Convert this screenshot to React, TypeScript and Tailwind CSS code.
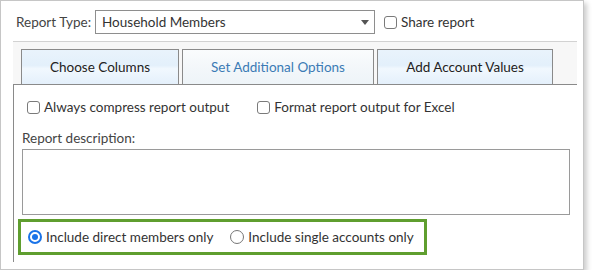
import { useState } from "react";

const font = "font-['Segoe_UI','Lato','Noto_Sans',sans-serif]";

const Checkbox = ({ label }: { label: string }) => (
  <label className="flex h-[17px] items-center">
    <span className="h-[13px] w-[13px] rounded-[3px] border border-[#7a7a7a] bg-white" />
    <span className="ml-[4px] text-[13.5px] leading-[17px] text-[#333]">{label}</span>
  </label>
);

const Radio = ({
  label,
  checked,
  onClick,
}: {
  label: string;
  checked: boolean;
  onClick: () => void;
}) => (
  <button onClick={onClick} className="flex items-center">
    {checked ? (
      <span className="flex h-[14px] w-[14px] items-center justify-center rounded-full border-2 border-[#1a73e8] bg-white">
        <span className="h-[6px] w-[6px] rounded-full bg-[#1a73e8]" />
      </span>
    ) : (
      <span className="h-[14px] w-[14px] rounded-full border border-[#767676] bg-white" />
    )}
    <span className="ml-[4px] text-[13.5px] leading-[17px] text-[#333]">{label}</span>
  </button>
);

const App = () => {
  const [direct, setDirect] = useState(true);
  const tabs = [
    { name: "Choose Columns", w: "w-[158px]", active: false },
    { name: "Set Additional Options", w: "w-[192px]", active: true },
    { name: "Add Account Values", w: "w-[176px]", active: false },
  ];

  return (
    <div className={font}>
      <div className="h-[270px] w-[584px] border border-[#c6c6c6] bg-white shadow-[3px_3px_5px_rgba(0,0,0,0.2)]">
        {/* Report type row */}
        <div className="ml-[15px] mt-[9px] flex h-[24px] items-center">
          <span className="text-[13.5px] leading-[17px] text-[#444]">Report Type:</span>
          <div className="ml-[4px] flex h-[24px] w-[280px] items-center justify-between border border-[#8e8e8e] bg-white pl-[6px] pr-[5px]">
            <span className="text-[13.5px] leading-[17px] text-[#333]">Household Members</span>
            <span className="h-0 w-0 border-x-[4px] border-t-[5px] border-x-transparent border-t-[#555]" />
          </div>
          <div className="ml-[9px]">
            <Checkbox label="Share report" />
          </div>
        </div>

        {/* Tabs */}
        <div className="ml-[12px] mt-[7px] w-[564px] border-t border-[#d2d2d2] bg-[#f7f7f7] pl-[8px] pt-[7px]">
          <div className="flex gap-[3px]">
            {tabs.map((t) => (
              <div
                key={t.name}
                className={`${t.w} flex h-[35px] items-center justify-center border-x border-t border-[#8a8a8a] pt-[1px] text-[13.5px] ${
                  t.active
                    ? "bg-[linear-gradient(#fafcfd,#f3f7fa_50%,#eef4f8)] text-[#3b7bb5]"
                    : "bg-[linear-gradient(#e9f3fc,#e3f0fb_45%,#f1f8fe_55%,#e4f0fb)] text-[#222]"
                }`}
              >
                {t.name}
              </div>
            ))}
          </div>
        </div>

        {/* Content */}
        <div className="ml-[12px] h-[178px] w-[564px] border-l border-t border-[#8a8a8a] bg-white pl-[8px] pt-[14px]">
          <div className="ml-[5px] flex items-center gap-[28px]">
            <Checkbox label="Always compress report output" />
            <Checkbox label="Format report output for Excel" />
          </div>
          <div className="mt-[14px] h-[17px] text-[13.5px] leading-[17px] text-[#444]">Report description:</div>
          <textarea className="mt-[2px] block h-[66px] w-[548px] resize-none border border-[#9a9a9a] outline-none" />
          <div className="-ml-[4px] mt-[4px] flex h-[36px] w-[409px] items-center gap-[17px] border-[3px] border-[#5f9e2f] pl-[7px]">
            <Radio label="Include direct members only" checked={direct} onClick={() => setDirect(true)} />
            <Radio label="Include single accounts only" checked={!direct} onClick={() => setDirect(false)} />
          </div>
        </div>
      </div>
    </div>
  );
};

export default App;
